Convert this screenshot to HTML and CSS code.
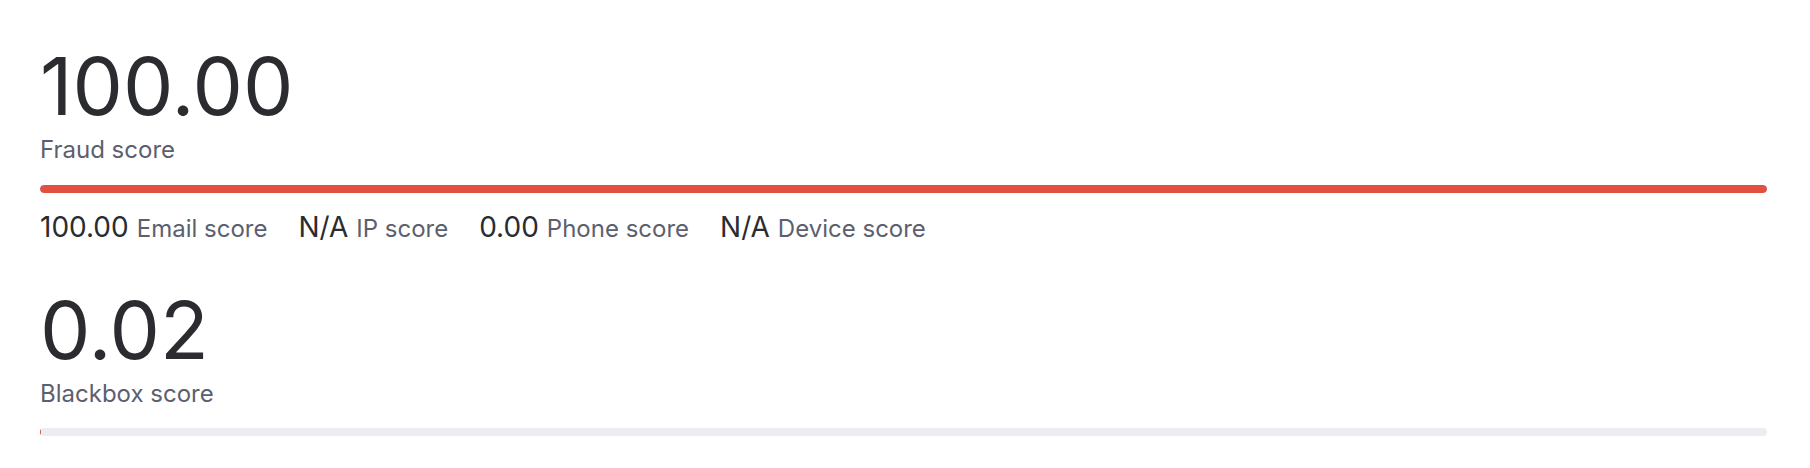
FILE: index.html
```html
<!DOCTYPE html>
<html lang="en">
<head>
    <meta charset="UTF-8">
    <meta name="viewport" content="width=device-width, initial-scale=1.0">
    <title>Scores</title>
    <link rel="stylesheet" href="styles.css">
</head>
<body>

    <div class="scores">
        <div class="score-block">
            <div class="score-value">100.00</div>
            <div class="score-label">Fraud score</div>
            <div class="bar">
                <div class="bar-fill" style="width: 100%"></div>
            </div>
            <div class="sub-scores">
                <span class="sub-score"><span class="sub-value">100.00</span><span class="sub-label">Email score</span></span>
                <span class="sub-score"><span class="sub-value">N/A</span><span class="sub-label">IP score</span></span>
                <span class="sub-score"><span class="sub-value">0.00</span><span class="sub-label">Phone score</span></span>
                <span class="sub-score"><span class="sub-value">N/A</span><span class="sub-label">Device score</span></span>
            </div>
        </div>

        <div class="score-block blackbox">
            <div class="score-value">0.02</div>
            <div class="score-label">Blackbox score</div>
            <div class="bar">
                <div class="bar-fill" style="width: 0.02%"></div>
            </div>
        </div>
    </div>

</body>
</html>
```

FILE: styles.css
```css
body {
    font-family: "Inter", "Liberation Sans", sans-serif;
    background: #fff;
    color: #2b2c30;
    margin: 0;
    padding: 0;
}

.scores {
    padding: 36px 43px 0 40px;
}

.score-value {
    font-size: 80px;
    line-height: 100px;
    color: #2b2c30;
}

.score-label {
    font-size: 24px;
    line-height: 28px;
    color: #5c5f6e;
}

.bar {
    height: 8px;
    margin-top: 21px;
    border-radius: 4px;
    background: #ececf1;
    overflow: hidden;
}

.bar-fill {
    height: 100%;
    border-radius: 4px;
    background: #e34f40;
}

.sub-scores {
    display: flex;
    align-items: baseline;
    gap: 31px;
    margin-top: 20px;
    line-height: 28px;
}

.sub-score {
    display: flex;
    align-items: baseline;
    gap: 8px;
}

.sub-value {
    font-size: 28px;
    color: #2b2c30;
}

.sub-label {
    font-size: 24px;
    color: #5c5f6e;
}

.blackbox {
    margin-top: 37px;
}

.blackbox .bar {
    margin-top: 20px;
}
```
